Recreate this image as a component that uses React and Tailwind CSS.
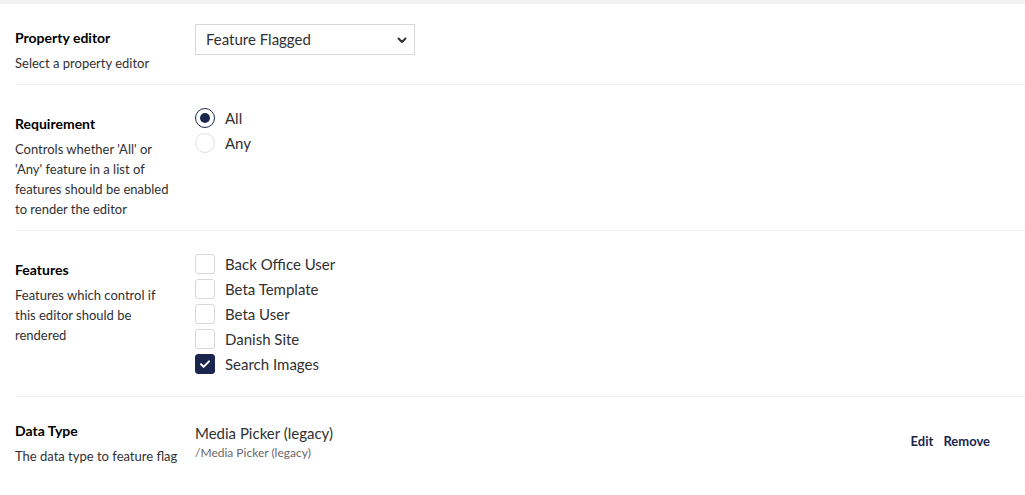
import React, { useState } from "react";

const features = ["Back Office User", "Beta Template", "Beta User", "Danish Site", "Search Images"];

const Radio = ({ checked, label, onClick }) => (
  <div className="flex items-center h-[25px] cursor-pointer" onClick={onClick}>
    <span
      className={`w-[20px] h-[20px] rounded-full flex items-center justify-center bg-white ${
        checked ? "border-[1.5px] border-[#1b264f]" : "border border-[#e0dfe2]"
      }`}
    >
      {checked && <span className="w-[10px] h-[10px] rounded-full bg-[#1b264f]" />}
    </span>
    <span className="ml-[10px] text-[15px] leading-[20px] text-[#303033]">{label}</span>
  </div>
);

const Checkbox = ({ checked, label, onClick }) => (
  <div className="flex items-center h-[25px] cursor-pointer" onClick={onClick}>
    <span
      className={`w-[20px] h-[20px] rounded-[3px] flex items-center justify-center ${
        checked ? "bg-[#1b264f] border border-[#1b264f]" : "bg-white border border-[#d8d7d9]"
      }`}
    >
      {checked && (
        <svg width="12" height="12" viewBox="0 0 12 12" fill="none">
          <path d="M2 6.3l2.6 2.6L10 3.4" stroke="white" strokeWidth="2" strokeLinecap="round" strokeLinejoin="round" />
        </svg>
      )}
    </span>
    <span className="ml-[10px] text-[15px] leading-[20px] text-[#303033]">{label}</span>
  </div>
);

const Label = ({ title, desc, pt, nowrap }) => (
  <div className={`w-[180px] shrink-0 pr-[20px] pb-[11px] ${pt}`}>
    <div className="text-[14px] leading-[20px] font-bold text-black">{title}</div>
    <div className={`mt-[5px] text-[13px] leading-[20px] text-[#303033] ${nowrap ? "whitespace-nowrap" : ""}`}>
      {desc}
    </div>
  </div>
);

export default function App() {
  const [requirement, setRequirement] = useState("All");
  const [checked, setChecked] = useState(["Search Images"]);

  const toggle = (f) =>
    setChecked(checked.includes(f) ? checked.filter((c) => c !== f) : [...checked, f]);

  return (
    <div className="min-h-screen bg-white" style={{ fontFamily: "Lato, 'Open Sans', sans-serif" }}>
      <div className="h-[4px] bg-[#f3f3f5]" />
      <div className="pl-[15px]">
        {/* Property editor */}
        <div className="flex">
          <Label title="Property editor" desc="Select a property editor" pt="pt-[24px]" />
          <div className="pt-[20px]">
            <div className="w-[220px] h-[31px] border border-[#d8d7d9] flex items-center justify-between pl-[10px] pr-[6px]">
              <span className="text-[15px] text-[#303033]">Feature Flagged</span>
              <svg width="12" height="12" viewBox="0 0 12 12" fill="none">
                <path d="M2.5 4.5L6 8l3.5-3.5" stroke="#303033" strokeWidth="2" strokeLinecap="round" strokeLinejoin="round" />
              </svg>
            </div>
          </div>
        </div>

        {/* Requirement */}
        <div className="flex border-t border-[#f3f3f5]">
          <Label
            title="Requirement"
            desc="Controls whether 'All' or 'Any' feature in a list of features should be enabled to render the editor"
            pt="pt-[29px]"
          />
          <div className="py-[20px]">
            {["All", "Any"].map((r) => (
              <Radio key={r} label={r} checked={requirement === r} onClick={() => setRequirement(r)} />
            ))}
          </div>
        </div>

        {/* Features */}
        <div className="flex border-t border-[#f3f3f5]">
          <Label
            title="Features"
            desc="Features which control if this editor should be rendered"
            pt="pt-[29px]"
          />
          <div className="py-[20px]">
            {features.map((f) => (
              <Checkbox key={f} label={f} checked={checked.includes(f)} onClick={() => toggle(f)} />
            ))}
          </div>
        </div>

        {/* Data Type */}
        <div className="flex border-t border-[#f3f3f5]">
          <Label title="Data Type" desc="The data type to feature flag" pt="pt-[24px]" nowrap />
          <div className="flex-1 flex items-start justify-between pt-[26px] pr-[35px]">
            <div>
              <div className="text-[15px] leading-[20px] text-[#303033]">Media Picker (legacy)</div>
              <div className="mt-[2px] text-[12px] leading-[16px] text-[#68676b]">/Media Picker (legacy)</div>
            </div>
            <div className="flex gap-[10px] mt-[9px] text-[13px] leading-[18px] font-bold text-[#1b264f]">
              <span>Edit</span>
              <span>Remove</span>
            </div>
          </div>
        </div>
      </div>
    </div>
  );
}
